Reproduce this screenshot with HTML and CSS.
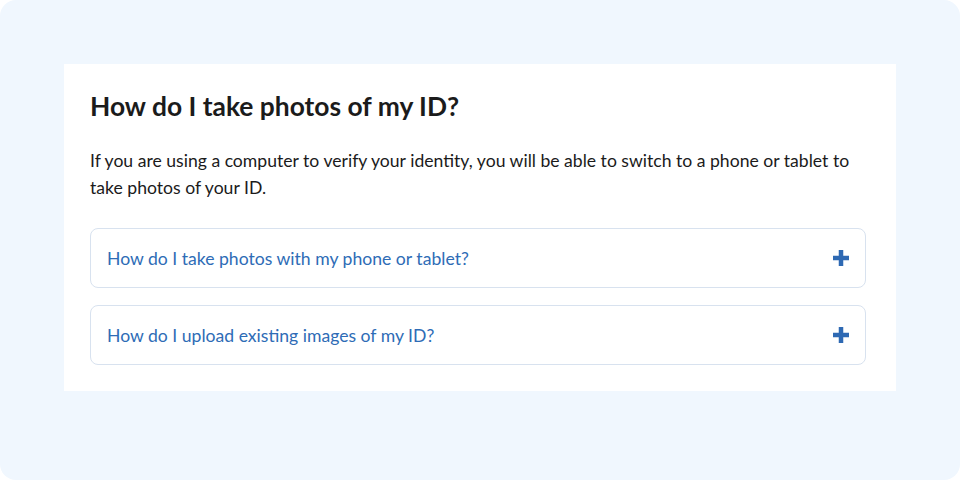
FILE: index.html
```html
<!DOCTYPE html>
<html lang="en">
<head>
<meta charset="utf-8">
<link rel="stylesheet" href="styles.css">
</head>
<body>
<div class="frame">
  <section class="card">
    <h1 class="title">How do I take photos of my ID?</h1>
    <p class="lead">If you are using a computer to verify your identity, you will be able to switch to a phone or tablet to take photos of your ID.</p>
    <div class="accordion">
      <button class="acc-item" type="button">
        <span class="acc-label">How do I take photos with my phone or tablet?</span>
        <svg class="acc-icon" width="18" height="18" viewBox="0 0 18 18" aria-hidden="true"><path d="M9 1v16M1 9h16" stroke="currentColor" stroke-width="4.5" stroke-linecap="butt"/></svg>
      </button>
      <button class="acc-item" type="button">
        <span class="acc-label">How do I upload existing images of my ID?</span>
        <svg class="acc-icon" width="18" height="18" viewBox="0 0 18 18" aria-hidden="true"><path d="M9 1v16M1 9h16" stroke="currentColor" stroke-width="4.5" stroke-linecap="butt"/></svg>
      </button>
    </div>
  </section>
</div>
</body>
</html>
```

FILE: styles.css
```css
html, body {
  margin: 0;
  padding: 0;
  background: #ffffff;
}
body {
  font-family: Lato, "Liberation Sans", sans-serif;
  color: #1b1b1b;
}
.frame {
  width: 960px;
  height: 480px;
  box-sizing: border-box;
  background: #f0f7fe;
  border-radius: 16px;
  padding: 64px;
}
.card {
  background: #ffffff;
  padding: 26px 30px 26px 26px;
}
.title {
  margin: 0;
  font-size: 26.4px;
  line-height: 32px;
  font-weight: 700;
}
.lead {
  margin: 25px 0 0;
  font-size: 17.6px;
  line-height: 27px;
}
.accordion {
  margin-top: 27px;
  display: flex;
  flex-direction: column;
  gap: 17px;
}
.acc-item {
  display: flex;
  align-items: center;
  justify-content: space-between;
  width: 100%;
  height: 60px;
  box-sizing: border-box;
  padding: 0 15px 0 16px;
  background: #ffffff;
  border: 1px solid #d8e2ef;
  border-radius: 8px;
  font-family: inherit;
  font-size: 17.6px;
  color: #2e6cb6;
  text-align: left;
  cursor: pointer;
}
.acc-icon {
  color: #2e69b3;
  flex: none;
}
```
